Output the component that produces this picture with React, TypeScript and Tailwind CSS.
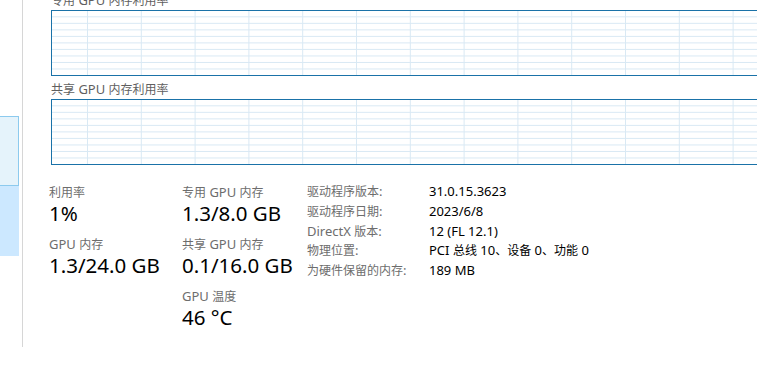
import React from "react";

const CJK_RE = /([\u2E80-\u9FFF\u3000-\u303F\uFF00-\uFFEF]+)/;
const CJK_TEST = /[\u2E80-\u9FFF\u3000-\u303F\uFF00-\uFFEF]/;

const CJK_CLS = "font-['Noto_Sans_CJK_SC',sans-serif] text-[12px]";
const LAT_CLS = "font-['Noto_Sans',sans-serif] text-[13px]";

function Txt({ s }: { s: string }) {
  const parts = s.split(CJK_RE).filter((p) => p.length > 0);
  return (
    <>
      {parts.map((p, i) =>
        CJK_TEST.test(p) ? (
          <span key={i} className={CJK_CLS}>
            {p}
          </span>
        ) : (
          <span key={i} className={LAT_CLS}>
            {p}
          </span>
        )
      )}
    </>
  );
}

function Chart() {
  const hs = [1, 2, 3, 4, 5, 6, 7, 8, 9].map((k) => 10.3 + 6.52 * k - 11);
  const vs = Array.from({ length: 14 }, (_, k) => 35.5 + 53.8 * k);
  return (
    <div className="h-[66px] w-[760px] shrink-0 border border-[#1a72a8] overflow-hidden">
      <svg width="760" height="64" className="block">
        {hs.map((y, i) => (
          <line key={"h" + i} x1="0" x2="760" y1={y} y2={y} stroke="#d9e9f4" strokeWidth="1" />
        ))}
        {vs.map((x, i) => (
          <line key={"v" + i} x1={x} x2={x} y1="0" y2="64" stroke="#d9e9f4" strokeWidth="1" />
        ))}
      </svg>
    </div>
  );
}

function Stat({ label, value, first }: { label: string; value: string; first?: boolean }) {
  return (
    <div className={first ? "" : "mt-[8px]"}>
      <div className="h-[20px] leading-[20px] text-[#6d6d6d] whitespace-nowrap">
        <Txt s={label} />
      </div>
      <div className="h-[24px] leading-[24px] text-[20.5px] text-black font-['Noto_Sans',sans-serif] whitespace-nowrap">
        {value}
      </div>
    </div>
  );
}

const info: [string, string][] = [
  ["驱动程序版本:", "31.0.15.3623"],
  ["驱动程序日期:", "2023/6/8"],
  ["DirectX 版本:", "12 (FL 12.1)"],
  ["物理位置:", "PCI 总线 10、设备 0、功能 0"],
  ["为硬件保留的内存:", "189 MB"],
];

export default function App() {
  return (
    <div className="w-[757px] h-[384px] bg-white overflow-hidden flex">
      <div className="w-[23px] h-[347px] shrink-0 border-r border-[#d6d6d6] pt-[116px]">
        <div className="w-[19px] h-[70px] bg-[#e5f3fb] border border-l-0 border-[#8ccaee]" />
        <div className="w-[19px] h-[70px] bg-[#cce8ff]" />
      </div>
      <div className="flex-1 min-w-0 overflow-hidden pl-[28px]">
        <div className="-mt-[11px] h-[21px] leading-[20px] text-[#5f5f5f] whitespace-nowrap">
          <Txt s="专用 GPU 内存利用率" />
        </div>
        <Chart />
        <div className="mt-[2px] h-[21px] leading-[20px] text-[#5f5f5f] whitespace-nowrap">
          <Txt s="共享 GPU 内存利用率" />
        </div>
        <Chart />
        <div className="mt-[16px] -ml-[2px] flex">
          <div className="w-[133px] shrink-0">
            <Stat first label="利用率" value="1%" />
            <Stat label="GPU 内存" value="1.3/24.0 GB" />
          </div>
          <div className="w-[125px] shrink-0">
            <Stat first label="专用 GPU 内存" value="1.3/8.0 GB" />
            <Stat label="共享 GPU 内存" value="0.1/16.0 GB" />
            <Stat label="GPU 温度" value="46 °C" />
          </div>
          <div className="grid grid-cols-[122px_auto] auto-rows-[19.75px] leading-[19.75px] whitespace-nowrap">
            {info.map(([k, v]) => (
              <React.Fragment key={k}>
                <div className="text-[#6d6d6d]">
                  <Txt s={k} />
                </div>
                <div className="text-black">
                  <Txt s={v} />
                </div>
              </React.Fragment>
            ))}
          </div>
        </div>
      </div>
    </div>
  );
}
